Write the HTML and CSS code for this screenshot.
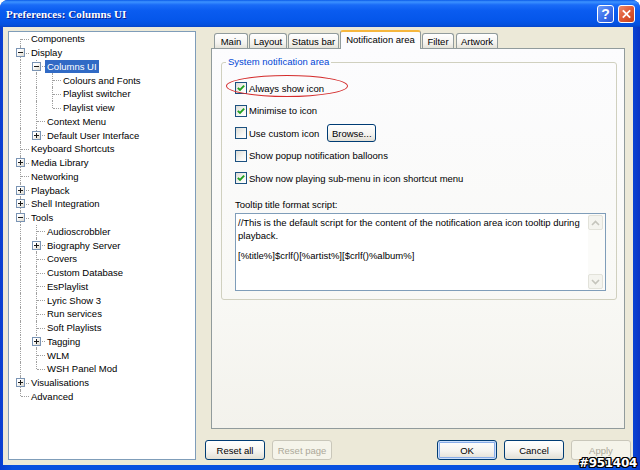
FILE: index.html
```html
<!DOCTYPE html>
<html>
<head>
<meta charset="utf-8">
<title>Preferences: Columns UI</title>
<link rel="stylesheet" href="styles.css">
</head>
<body>
<div class="window">
  <div class="titlebar">
    <span class="title">Preferences: Columns UI</span>
    <div class="tbtns">
      <span class="tbtn help">?</span>
      <span class="tbtn close"><svg width="17" height="18" viewBox="0 0 17 18"><path d="M5 5.5 L12 12.5 M12 5.5 L5 12.5" stroke="#fff" stroke-width="2" stroke-linecap="square"/></svg></span>
    </div>
  </div>
  <div class="client">
    <div class="tree">
      <div class="row"><span class="c first"></span><span class="lbl">Components</span></div>
      <div class="row"><span class="c"><span class="exp"></span></span><span class="lbl">Display</span></div>
      <div class="row"><span class="g v"></span><span class="c"><span class="exp"></span></span><span class="lbl sel">Columns UI</span></div>
      <div class="row"><span class="g v"></span><span class="g v"></span><span class="c"></span><span class="lbl">Colours and Fonts</span></div>
      <div class="row"><span class="g v"></span><span class="g v"></span><span class="c"></span><span class="lbl">Playlist switcher</span></div>
      <div class="row"><span class="g v"></span><span class="g v"></span><span class="c last"></span><span class="lbl">Playlist view</span></div>
      <div class="row"><span class="g v"></span><span class="c"></span><span class="lbl">Context Menu</span></div>
      <div class="row"><span class="g v"></span><span class="c last"><span class="exp plus"></span></span><span class="lbl">Default User Interface</span></div>
      <div class="row"><span class="c"></span><span class="lbl">Keyboard Shortcuts</span></div>
      <div class="row"><span class="c"><span class="exp plus"></span></span><span class="lbl">Media Library</span></div>
      <div class="row"><span class="c"></span><span class="lbl">Networking</span></div>
      <div class="row"><span class="c"><span class="exp plus"></span></span><span class="lbl">Playback</span></div>
      <div class="row"><span class="c"><span class="exp plus"></span></span><span class="lbl">Shell Integration</span></div>
      <div class="row"><span class="c"><span class="exp"></span></span><span class="lbl">Tools</span></div>
      <div class="row"><span class="g v"></span><span class="c"></span><span class="lbl">Audioscrobbler</span></div>
      <div class="row"><span class="g v"></span><span class="c"><span class="exp plus"></span></span><span class="lbl">Biography Server</span></div>
      <div class="row"><span class="g v"></span><span class="c"></span><span class="lbl">Covers</span></div>
      <div class="row"><span class="g v"></span><span class="c"></span><span class="lbl">Custom Database</span></div>
      <div class="row"><span class="g v"></span><span class="c"></span><span class="lbl">EsPlaylist</span></div>
      <div class="row"><span class="g v"></span><span class="c"></span><span class="lbl">Lyric Show 3</span></div>
      <div class="row"><span class="g v"></span><span class="c"></span><span class="lbl">Run services</span></div>
      <div class="row"><span class="g v"></span><span class="c"></span><span class="lbl">Soft Playlists</span></div>
      <div class="row"><span class="g v"></span><span class="c"><span class="exp plus"></span></span><span class="lbl">Tagging</span></div>
      <div class="row"><span class="g v"></span><span class="c"></span><span class="lbl">WLM</span></div>
      <div class="row"><span class="g v"></span><span class="c last"></span><span class="lbl">WSH Panel Mod</span></div>
      <div class="row"><span class="c"><span class="exp plus"></span></span><span class="lbl">Visualisations</span></div>
      <div class="row"><span class="c last"></span><span class="lbl">Advanced</span></div>
    </div>
    <div class="main">
      <div class="tabs">
        <div class="tab t-main">Main</div>
        <div class="tab t-layout">Layout</div>
        <div class="tab t-status">Status bar</div>
        <div class="tab t-notif active">Notification area</div>
        <div class="tab t-filter">Filter</div>
        <div class="tab t-art">Artwork</div>
      </div>
      <div class="panel">
        <fieldset class="group">
          <legend class="legend">System notification area</legend>
          <div class="opt">
            <span class="cb on"><svg width="10" height="10" viewBox="0 0 10 10"><path d="M1.8 4.8 L4 7 L8.2 2.6" stroke="#21a121" stroke-width="1.9" fill="none"/></svg></span>
            <span>Always show icon</span>
            <span class="ring"></span>
          </div>
          <div class="opt">
            <span class="cb on"><svg width="10" height="10" viewBox="0 0 10 10"><path d="M1.8 4.8 L4 7 L8.2 2.6" stroke="#21a121" stroke-width="1.9" fill="none"/></svg></span>
            <span>Minimise to icon</span>
          </div>
          <div class="opt">
            <span class="cb"></span>
            <span>Use custom icon</span>
            <button class="btn browse">Browse...</button>
          </div>
          <div class="opt">
            <span class="cb"></span>
            <span>Show popup notification balloons</span>
          </div>
          <div class="opt">
            <span class="cb on"><svg width="10" height="10" viewBox="0 0 10 10"><path d="M1.8 4.8 L4 7 L8.2 2.6" stroke="#21a121" stroke-width="1.9" fill="none"/></svg></span>
            <span>Show now playing sub-menu in icon shortcut menu</span>
          </div>
          <div class="flabel">Tooltip title format script:</div>
          <div class="editor">
            <div class="etext">
              <div>//This is the default script for the content of the notification area icon tooltip during</div>
              <div>playback.</div>
              <div class="blank"></div>
              <div>[%title%]$crlf()[%artist%][$crlf()%album%]</div>
            </div>
            <div class="vscroll">
              <span class="sarrow"><svg width="9" height="6" viewBox="0 0 9 6"><path d="M1 5 L4.5 1.5 L8 5" stroke="#c4c4bc" stroke-width="1.6" fill="none"/></svg></span>
              <span class="sarrow"><svg width="9" height="6" viewBox="0 0 9 6"><path d="M1 1 L4.5 4.5 L8 1" stroke="#c4c4bc" stroke-width="1.6" fill="none"/></svg></span>
            </div>
          </div>
        </fieldset>
      </div>
      <div class="buttons">
        <div class="bgroup left">
          <button class="btn">Reset all</button>
          <button class="btn" disabled>Reset page</button>
        </div>
        <div class="bgroup right">
          <button class="btn def">OK</button>
          <button class="btn">Cancel</button>
          <button class="btn" disabled>Apply</button>
        </div>
      </div>
    </div>
  </div>
  <div class="wm">#951404</div>
</div>
</body>
</html>
```

FILE: styles.css
```css
html, body {
  margin: 0;
  padding: 0;
  background: #ffffff;
}

.window {
  position: relative;
  width: 640px;
  height: 470px;
  box-sizing: border-box;
  background: linear-gradient(90deg, #0a3ed0, #0850e0 2%, #0850e0 98%, #0a34c4);
  border-radius: 8px 8px 0 0;
  display: flex;
  flex-direction: column;
  overflow: hidden;
  font-family: "Liberation Sans", Arial, sans-serif;
  font-size: 9.5px;
  color: #000;
}

.titlebar {
  height: 27px;
  flex: none;
  display: flex;
  align-items: center;
  justify-content: space-between;
  padding: 0 5px 0 6px;
  background: linear-gradient(#0a5ae8 0%, #3d93ff 7%, #1a6cf7 18%, #0a5cf0 40%, #0556ea 75%, #0450de 92%, #0745c8 100%);
}

.title {
  font-family: "Liberation Serif", "Times New Roman", serif;
  font-weight: bold;
  font-size: 11px;
  color: #ffffff;
  text-shadow: 1px 1px 0 #0a1e8c;
  letter-spacing: 0.1px;
}

.tbtns {
  display: flex;
  gap: 4px;
  margin-top: 1px;
}

.tbtn {
  width: 17px;
  height: 18px;
  box-sizing: border-box;
  border: 1px solid #ffffff;
  border-radius: 3px;
  display: flex;
  align-items: center;
  justify-content: center;
}

.tbtn.help {
  background: linear-gradient(135deg, #6f9cf8, #3c6fea 55%, #2856d8);
  color: #ffffff;
  font-weight: bold;
  font-size: 14px;
  font-family: "Liberation Sans", Arial, sans-serif;
}

.tbtn.close {
  background: linear-gradient(135deg, #ec8a6a, #df5a36 50%, #c4401c);
}

.tbtn.close svg {
  display: block;
}

.client {
  flex: 1;
  margin: 0 7px 5px 3px;
  background: #ece9d8;
  display: flex;
  min-height: 0;
}

/* ---------- tree ---------- */
.tree {
  width: 188px;
  flex: none;
  margin: 4px 0 5px 5px;
  box-sizing: border-box;
  border: 1px solid #7f9db9;
  background: #ffffff;
  padding: 0 0 0 3px;
}

.row {
  display: flex;
  align-items: center;
  height: 13.75px;
}

.g, .c {
  position: relative;
  width: 16px;
  height: 100%;
  flex: none;
}

.g.v::before,
.c::before {
  content: "";
  position: absolute;
  left: 8px;
  top: 0;
  bottom: 0;
  border-left: 1px dotted #a0a0a0;
}

.c.first::before {
  top: 50%;
}

.c.last::before {
  bottom: 50%;
}

.c::after {
  content: "";
  position: absolute;
  left: 9px;
  right: -1px;
  top: 50%;
  border-top: 1px dotted #a0a0a0;
}

.exp {
  position: absolute;
  left: 4px;
  top: 50%;
  margin-top: -4.5px;
  width: 9px;
  height: 9px;
  box-sizing: border-box;
  border: 1px solid #7a94b4;
  background: linear-gradient(135deg, #ffffff 30%, #dcd8cc);
  z-index: 1;
}

.exp::before {
  content: "";
  position: absolute;
  left: 1px;
  top: 3px;
  width: 5px;
  height: 1px;
  background: #1a1a1a;
}

.exp.plus::after {
  content: "";
  position: absolute;
  left: 3px;
  top: 1px;
  width: 1px;
  height: 5px;
  background: #1a1a1a;
}

.lbl {
  margin-left: 1px;
  padding: 0 2px;
  line-height: 13px;
  white-space: nowrap;
}

.lbl.sel {
  background: #316ac5;
  color: #ffffff;
}

/* ---------- main area ---------- */
.main {
  flex: 1;
  margin-left: 4px;
  display: flex;
  flex-direction: column;
  padding-top: 3px;
}

.tabs {
  height: 18px;
  display: flex;
  align-items: flex-end;
  gap: 1px;
  margin: 0 8px 0 11px;
  padding-left: 3px;
}

.tab {
  height: 15px;
  box-sizing: border-box;
  border: 1px solid #919b9c;
  border-bottom: none;
  border-radius: 3px 3px 0 0;
  background: linear-gradient(#ffffff, #f4f3ef 65%, #e4e2d9);
  display: flex;
  align-items: center;
  justify-content: center;
  white-space: nowrap;
}

.tab.active {
  height: 19px;
  margin-bottom: -1px;
  border-top: 2px solid #f6b73e;
  background: #fcfcfe;
  position: relative;
  z-index: 1;
  padding-bottom: 2px;
}

.t-main { width: 34px; }
.t-layout { width: 38px; }
.t-status { width: 51px; }
.t-notif { width: 81px; }
.t-filter { width: 32px; }
.t-art { width: 42px; margin-left: 1px; }

.panel {
  height: 381px;
  box-sizing: border-box;
  margin: 0 8px 0 11px;
  border: 1px solid #919b9c;
  background: linear-gradient(#fcfcfe, #f9f9f6 60%, #f3f2ec);
  padding-top: 7px;
}

.group {
  margin: 0 7px 0 9px;
  padding: 9px 10px 8px 13px;
  border: 1px solid #d0d0bf;
  border-radius: 3px;
  min-inline-size: 0;
}

.legend {
  color: #0046d5;
  padding: 0 2px;
  margin-left: -9px;
  line-height: 12px;
}

.opt {
  position: relative;
  height: 22.5px;
  display: flex;
  align-items: center;
  white-space: nowrap;
}

.cb {
  width: 12px;
  height: 12px;
  box-sizing: border-box;
  border: 1px solid #1c5180;
  background: linear-gradient(135deg, #dcdcd6, #f6f6f3 60%, #ffffff);
  margin-right: 2px;
  display: flex;
  align-items: center;
  justify-content: center;
  flex: none;
}

.cb svg {
  display: block;
}

.ring {
  position: absolute;
  left: -9px;
  top: -2px;
  width: 122px;
  height: 22px;
  box-sizing: border-box;
  border: 1.5px solid #d42c2c;
  border-radius: 50%;
}

.btn {
  width: 60px;
  height: 20px;
  box-sizing: border-box;
  border: 1px solid #003c74;
  border-radius: 3px;
  background: linear-gradient(#ffffff, #f5f4f0 55%, #e2dfd5);
  font-family: "Liberation Sans", Arial, sans-serif;
  font-size: 9.5px;
  color: #000000;
  padding: 0;
  margin: 0;
}

.btn.browse {
  width: 49px;
  height: 18px;
  margin-left: 8px;
}

.btn.def {
  box-shadow: inset 0 0 0 1px #cde0fb, inset 0 0 0 2px #89ade9;
}

.btn:disabled {
  border-color: #c9c7ba;
  color: #aca899;
  background: #f5f4ea;
}

.flabel {
  margin-top: 9.5px;
  line-height: 12px;
}

.editor {
  margin-top: 2px;
  height: 78px;
  box-sizing: border-box;
  border: 1px solid #7f9db9;
  background: #ffffff;
  display: flex;
}

.etext {
  flex: 1;
  padding: 2px 2px;
  line-height: 13px;
  white-space: nowrap;
  overflow: hidden;
}

.blank {
  height: 7px;
}

.vscroll {
  width: 16px;
  flex: none;
  background: #fbfbf9;
  display: flex;
  flex-direction: column;
  justify-content: space-between;
  padding: 1px 1px 1px 0;
}

.sarrow {
  width: 15px;
  height: 15px;
  box-sizing: border-box;
  border: 1px solid #e2e2da;
  border-radius: 2px;
  background: #f4f4ef;
  display: flex;
  align-items: center;
  justify-content: center;
}

.sarrow svg {
  display: block;
}

.buttons {
  margin-top: 11px;
  display: flex;
  justify-content: space-between;
  padding: 0 2px 0 5px;
}

.bgroup {
  display: flex;
}

.bgroup.left {
  gap: 7px;
}

.bgroup.right {
  gap: 7px;
}

.wm {
  position: absolute;
  right: 3px;
  bottom: 0px;
  font-family: "DejaVu Sans", sans-serif;
  font-weight: bold;
  font-size: 12px;
  line-height: 14px;
  color: #ffffff;
  letter-spacing: -0.3px;
  text-shadow: 1px 0 0 #000, -1px 0 0 #000, 0 1px 0 #000, 0 -1px 0 #000, 1px 1px 0 #000, -1px -1px 0 #000, 1px -1px 0 #000, -1px 1px 0 #000;
}
```
